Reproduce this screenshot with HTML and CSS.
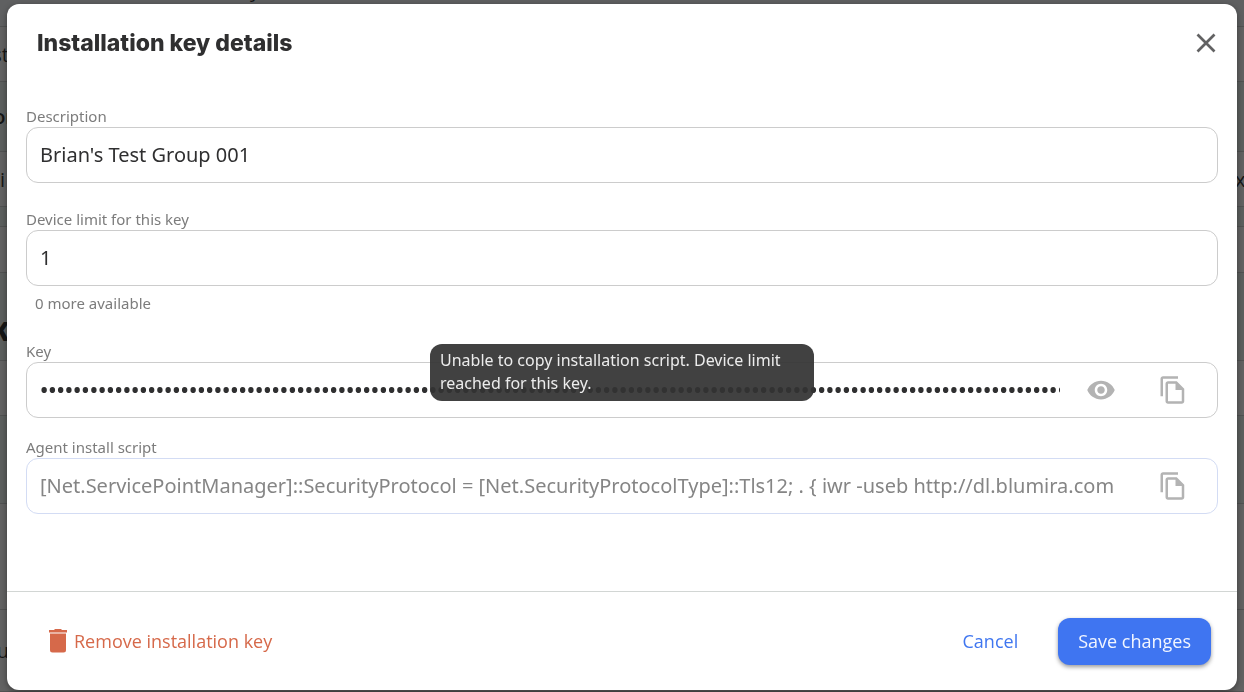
FILE: index.html
```html
<!DOCTYPE html>
<html lang="en">
<head>
<meta charset="utf-8">
<meta name="viewport" content="width=device-width, initial-scale=1">
<title>Installation key details</title>
<link rel="stylesheet" href="styles.css">
<script src="key.js" defer></script>
</head>
<body>
<div class="page" aria-hidden="true">
  <div class="strip strip-top"><span class="scrolled">y</span></div>
  <div class="strip strip-m"><span class="edge">st</span></div>
  <div class="strip strip-l tint"><span class="edge strong">or</span></div>
  <div class="strip strip-m"><span class="edge start">i</span><span class="edge end">x;</span></div>
  <div class="strip strip-xs tint"></div>
  <div class="strip strip-s"></div>
  <div class="strip strip-xl tint"><span class="edge heading">K</span></div>
  <div class="strip strip-m"></div>
  <div class="strip strip-xl tint"></div>
  <div class="strip strip-xxl"></div>
  <div class="strip strip-last"><span class="edge">u</span></div>
</div>
<div class="overlay">
  <form class="dialog" role="dialog" aria-modal="true" aria-labelledby="title">
    <header class="header">
      <h1 class="title" id="title">Installation key details</h1>
      <button class="icon-button close" type="button" aria-label="Close">
        <svg width="20" height="20" viewBox="0 0 20 20"><path d="M1.500 1.500 18.500 18.500M18.500 1.500 1.500 18.500" fill="none" stroke="currentColor" stroke-width="2.700"/></svg>
      </button>
    </header>
    <div class="body">
      <div class="field">
        <label class="label" for="description">Description</label>
        <div class="box"><input class="input" id="description" type="text" value="Brian's Test Group 001"></div>
      </div>
      <div class="field">
        <label class="label" for="limit">Device limit for this key</label>
        <div class="box"><input class="input" id="limit" type="text" inputmode="numeric" value="1"></div>
        <p class="helper">0 more available</p>
      </div>
      <div class="field tight">
        <label class="label" for="key">Key</label>
        <div class="box">
          <input class="input secret" id="key" type="password" readonly>
          <button class="icon-button eye" type="button" aria-label="Show key">
            <svg width="30" height="30" viewBox="0 0 24 24"><path fill="currentColor" d="M12 4.500C7 4.500 2.730 7.610 1 12c1.730 4.390 6 7.500 11 7.500s9.270-3.110 11-7.500c-1.730-4.390-6-7.500-11-7.500zM12 17c-2.760 0-5-2.240-5-5s2.240-5 5-5 5 2.240 5 5-2.240 5-5 5zm0-8c-1.660 0-3 1.340-3 3s1.340 3 3 3 3-1.340 3-3-1.340-3-3-3z"/></svg>
          </button>
          <button class="icon-button" type="button" aria-label="Copy key">
            <svg width="30" height="30" viewBox="0 0 24 24"><path fill="currentColor" d="M16 1H4c-1.100 0-2 .9-2 2v14h2V3h12zM15 5H8c-1.100 0-2 .9-2 2v14c0 1.100.9 2 2 2h11c1.100 0 2-.9 2-2V11zM8 21V7h6v5h5v9z"/></svg>
          </button>
          <div class="tooltip" role="tooltip">Unable to copy installation script. Device limit reached for this key.</div>
        </div>
      </div>
      <div class="field">
        <label class="label" for="script">Agent install script</label>
        <div class="box box-muted">
          <input class="input" id="script" type="text" readonly value="[Net.ServicePointManager]::SecurityProtocol = [Net.SecurityProtocolType]::Tls12; . { iwr -useb http://dl.blumira.com">
          <button class="icon-button" type="button" aria-label="Copy install script">
            <svg width="30" height="30" viewBox="0 0 24 24"><path fill="currentColor" d="M16 1H4c-1.100 0-2 .9-2 2v14h2V3h12zM15 5H8c-1.100 0-2 .9-2 2v14c0 1.100.9 2 2 2h11c1.100 0 2-.9 2-2V11zM8 21V7h6v5h5v9z"/></svg>
          </button>
        </div>
      </div>
    </div>
    <footer class="footer">
      <button class="text-button danger" type="button">
        <svg width="18" height="24" viewBox="0 0 18 24"><path fill="currentColor" d="M6 0h6l1 1h5v2.500H0V1h5zM1 4.500h16V21a2.500 2.500 0 0 1-2.500 2.500h-11A2.500 2.500 0 0 1 1 21z"/></svg>
        Remove installation key
      </button>
      <div class="actions">
        <button class="text-button" type="button">Cancel</button>
        <button class="save" type="submit">Save changes</button>
      </div>
    </footer>
  </form>
</div>
</body>
</html>
```

FILE: styles.css
```css
* { box-sizing: border-box; }

body {
  margin: 0;
  font-family: "Open Sans", "Noto Sans", sans-serif;
  color: #2f2f30;
}

button, input { font: inherit; }

.page {
  height: 100vh;
  overflow: hidden;
  background: #626262;
  color: #161616;
  font-size: 20px;
}

.strip {
  display: flex;
  align-items: center;
  justify-content: space-between;
  border-bottom: 1px solid #515252;
}

.tint { background: #5c5f5e; }
.strip-top { height: 27px; background: #5f6061; }
.strip-xs { height: 20px; }
.strip-s { height: 46px; }
.strip-m { height: 55px; }
.strip-l { height: 70px; }
.strip-xl { height: 88px; }
.strip-xxl { height: 106px; }
.strip-last { height: 82px; }

.edge {
  display: flex;
  flex: none;
  justify-content: flex-end;
  width: 9px;
  overflow: hidden;
}

.edge.start, .edge.end { justify-content: flex-start; }
.strong { width: 14px; font-weight: 600; }
.heading { padding-top: 28px; font-size: 26px; font-weight: 800; }

.scrolled {
  align-self: flex-start;
  margin: -10px 0 0 250px;
  line-height: 0;
}

.overlay {
  position: fixed;
  inset: 0;
  display: flex;
  padding: 4px 7px 2px;
}

.dialog {
  display: flex;
  flex: 1;
  flex-direction: column;
  min-width: 0;
  border-radius: 12px;
  background: #fff;
  box-shadow: 0 2px 6px rgba(0, 0, 0, 0.4);
}

.header {
  display: flex;
  align-items: center;
  justify-content: space-between;
  height: 78px;
  padding: 0 16px 0 30px;
}

.title {
  margin: 0;
  font-family: Inter, sans-serif;
  font-size: 23px;
  font-weight: 800;
  line-height: 32px;
}

.icon-button {
  display: flex;
  flex: none;
  padding: 0;
  border: 0;
  background: none;
  color: #b3b3b3;
}

.eye { margin-right: 42px; }
.close { padding: 5px; color: #626263; }

.body {
  flex: 1;
  padding: 23px 19px;
}

.field { margin-bottom: 25px; }
.tight { margin-bottom: 18px; }

.label, .helper {
  display: block;
  margin: 0;
  font-family: "Noto Sans", sans-serif;
  font-size: 15px;
  line-height: 22px;
  color: #7c7c7c;
}

.helper { padding: 6px 9px 1px; }

.box {
  position: relative;
  display: flex;
  align-items: center;
  height: 56px;
  padding: 0 29px 0 13px;
  border: 1px solid #ccc;
  border-radius: 12px;
}

.box-muted { border-color: #d3dcf4; }

.input {
  flex: 1;
  min-width: 0;
  margin-right: 26px;
  padding: 0;
  border: 0;
  outline: 0;
  background: none;
  font-family: "Noto Sans", sans-serif;
  font-size: 20px;
  line-height: 30px;
  color: #2f2f30;
}

.box-muted .input { color: #858585; }

.input.secret {
  padding: 0 0 2px;
  font-family: "Open Sans", sans-serif;
  font-size: 22px;
  font-weight: 600;
}

.tooltip {
  position: absolute;
  top: -19px;
  left: calc(50% - 192px);
  width: 384px;
  padding: 5px 10px 6px;
  border-radius: 12px;
  background: rgba(51, 51, 51, 0.93);
  color: #ececec;
  font-family: "Noto Sans", sans-serif;
  font-size: 16px;
  line-height: 23px;
}

.footer {
  display: flex;
  align-items: center;
  justify-content: space-between;
  height: 99px;
  padding: 0 26px 0 42px;
  border-top: 1px solid #d2d6d4;
}

.actions {
  display: flex;
  align-items: center;
  gap: 40px;
}

.text-button {
  display: flex;
  align-items: center;
  gap: 7px;
  padding: 0;
  border: 0;
  background: none;
  color: #3f76f0;
  font-size: 18px;
  line-height: 26px;
}

.danger { color: #d6694a; }

.save {
  padding: 10px 20px 11px;
  border: 0;
  border-radius: 12px;
  background: #3f75f1;
  box-shadow: 0 2px 4px rgba(0, 0, 0, 0.4);
  color: #f2f6ff;
  font-size: 18px;
  line-height: 26px;
}
```

FILE: key.js
```js
document.getElementById("key").value = "0123456789abcdef".repeat(9);
```
